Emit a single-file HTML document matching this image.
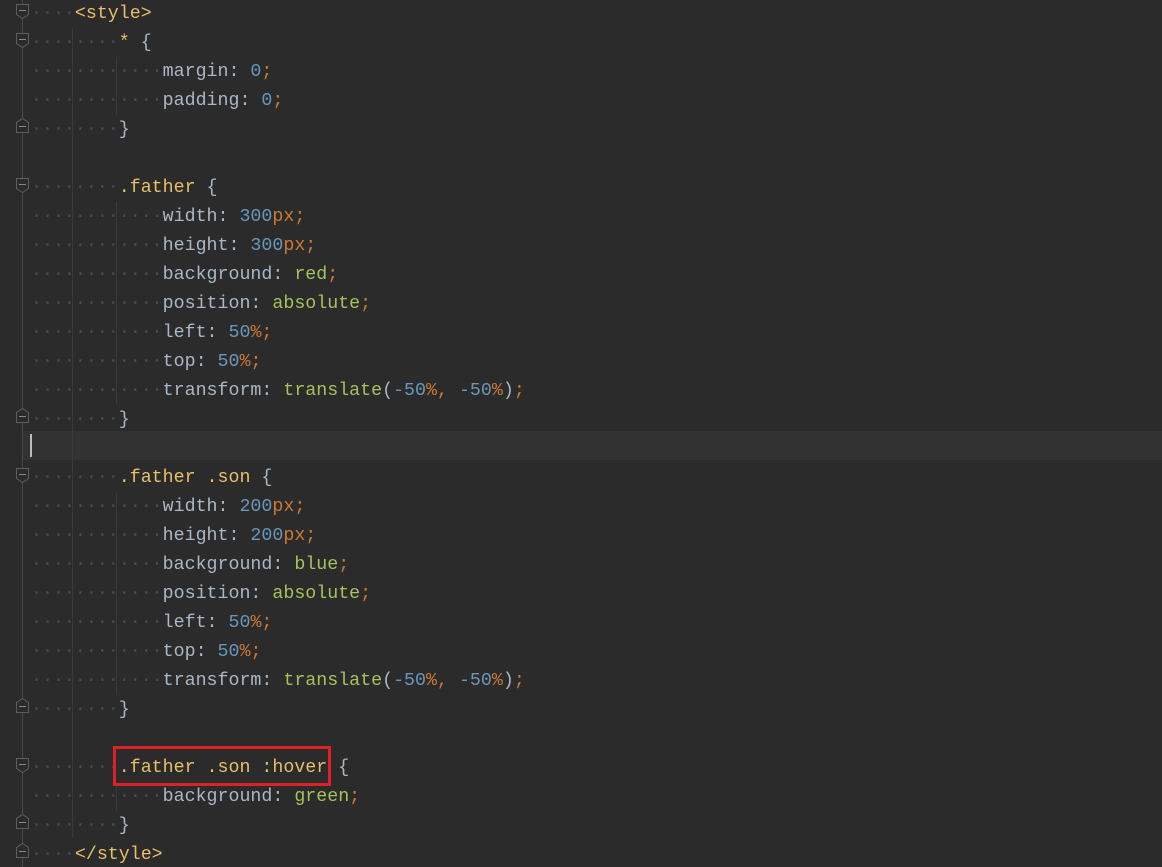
<!DOCTYPE html>
<html><head><meta charset="utf-8"><style>
html,body{margin:0;padding:0;background:#2b2b2b;width:1162px;height:867px;overflow:hidden;position:relative}
.code{position:absolute;left:31px;top:0px;font-family:"Liberation Mono",monospace;font-size:18.3px;line-height:29px;color:#a9b7c6;white-space:pre}
.d{color:#4a4a4a}
.t{color:#e8bf6a}
.n{color:#6897bb}
.o{color:#cc7832}
.g{color:#a5c25c}
.hl{position:absolute;left:22px;right:0;top:431px;height:29px;background:#323232}
.cur{position:absolute;left:30px;top:434px;width:2px;height:23px;background:#bbb}
.gl{position:absolute;left:22px;top:0;width:1px;height:867px;background:#4a4a4a}
.ig{position:absolute;width:1px;background:#3a3a3a}
.f{position:absolute;left:16px;width:13px;height:15px}
</style></head><body>
<div class="hl"></div>
<div class="gl"></div>
<div class="ig" style="left:72px;top:28px;height:810px"></div>
<div class="ig" style="left:116px;top:57px;height:58px"></div>
<div class="ig" style="left:116px;top:202px;height:203px"></div>
<div class="ig" style="left:116px;top:492px;height:203px"></div>
<div class="ig" style="left:116px;top:782px;height:29px"></div>
<svg class="f" style="top:4px" viewBox="0 0 13 15"><path d="M.5 .5H12.5V10.5L6.5 14.5L.5 10.5Z" fill="#2b2b2b" stroke="#5e5e5e"/><path d="M3 6.5H10" stroke="#888"/></svg>
<svg class="f" style="top:33px" viewBox="0 0 13 15"><path d="M.5 .5H12.5V10.5L6.5 14.5L.5 10.5Z" fill="#2b2b2b" stroke="#5e5e5e"/><path d="M3 6.5H10" stroke="#888"/></svg>
<svg class="f" style="top:178px" viewBox="0 0 13 15"><path d="M.5 .5H12.5V10.5L6.5 14.5L.5 10.5Z" fill="#2b2b2b" stroke="#5e5e5e"/><path d="M3 6.5H10" stroke="#888"/></svg>
<svg class="f" style="top:468px" viewBox="0 0 13 15"><path d="M.5 .5H12.5V10.5L6.5 14.5L.5 10.5Z" fill="#2b2b2b" stroke="#5e5e5e"/><path d="M3 6.5H10" stroke="#888"/></svg>
<svg class="f" style="top:758px" viewBox="0 0 13 15"><path d="M.5 .5H12.5V10.5L6.5 14.5L.5 10.5Z" fill="#2b2b2b" stroke="#5e5e5e"/><path d="M3 6.5H10" stroke="#888"/></svg>
<svg class="f" style="top:118px" viewBox="0 0 13 15"><path d="M.5 14.5H12.5V4.5L6.5 .5L.5 4.5Z" fill="#2b2b2b" stroke="#5e5e5e"/><path d="M3 8.5H10" stroke="#888"/></svg>
<svg class="f" style="top:408px" viewBox="0 0 13 15"><path d="M.5 14.5H12.5V4.5L6.5 .5L.5 4.5Z" fill="#2b2b2b" stroke="#5e5e5e"/><path d="M3 8.5H10" stroke="#888"/></svg>
<svg class="f" style="top:698px" viewBox="0 0 13 15"><path d="M.5 14.5H12.5V4.5L6.5 .5L.5 4.5Z" fill="#2b2b2b" stroke="#5e5e5e"/><path d="M3 8.5H10" stroke="#888"/></svg>
<svg class="f" style="top:814px" viewBox="0 0 13 15"><path d="M.5 14.5H12.5V4.5L6.5 .5L.5 4.5Z" fill="#2b2b2b" stroke="#5e5e5e"/><path d="M3 8.5H10" stroke="#888"/></svg>
<svg class="f" style="top:843px" viewBox="0 0 13 15"><path d="M.5 14.5H12.5V4.5L6.5 .5L.5 4.5Z" fill="#2b2b2b" stroke="#5e5e5e"/><path d="M3 8.5H10" stroke="#888"/></svg>
<div class="cur"></div>
<div class="code"><span class="d">····</span><span class="t">&lt;style&gt;</span>
<span class="d">········</span><span class="t">*</span> {
<span class="d">············</span>margin: <span class="n">0</span><span class="o">;</span>
<span class="d">············</span>padding: <span class="n">0</span><span class="o">;</span>
<span class="d">········</span>}

<span class="d">········</span><span class="t">.father</span> {
<span class="d">············</span>width: <span class="n">300</span><span class="o">px;</span>
<span class="d">············</span>height: <span class="n">300</span><span class="o">px;</span>
<span class="d">············</span>background: <span class="g">red</span><span class="o">;</span>
<span class="d">············</span>position: <span class="g">absolute</span><span class="o">;</span>
<span class="d">············</span>left: <span class="n">50</span><span class="o">%;</span>
<span class="d">············</span>top: <span class="n">50</span><span class="o">%;</span>
<span class="d">············</span>transform: <span class="g">translate</span>(<span class="n">-50</span><span class="o">%,</span> <span class="n">-50</span><span class="o">%</span>)<span class="o">;</span>
<span class="d">········</span>}

<span class="d">········</span><span class="t">.father .son</span> {
<span class="d">············</span>width: <span class="n">200</span><span class="o">px;</span>
<span class="d">············</span>height: <span class="n">200</span><span class="o">px;</span>
<span class="d">············</span>background: <span class="g">blue</span><span class="o">;</span>
<span class="d">············</span>position: <span class="g">absolute</span><span class="o">;</span>
<span class="d">············</span>left: <span class="n">50</span><span class="o">%;</span>
<span class="d">············</span>top: <span class="n">50</span><span class="o">%;</span>
<span class="d">············</span>transform: <span class="g">translate</span>(<span class="n">-50</span><span class="o">%,</span> <span class="n">-50</span><span class="o">%</span>)<span class="o">;</span>
<span class="d">········</span>}

<span class="d">········</span><span class="t">.father .son :hover</span> {
<span class="d">············</span>background: <span class="g">green</span><span class="o">;</span>
<span class="d">········</span>}
<span class="d">····</span><span class="t">&lt;/style&gt;</span></div>
<div style="position:absolute;left:113px;top:746px;width:212px;height:34px;border:3px solid #e02028"></div>
</body></html>
